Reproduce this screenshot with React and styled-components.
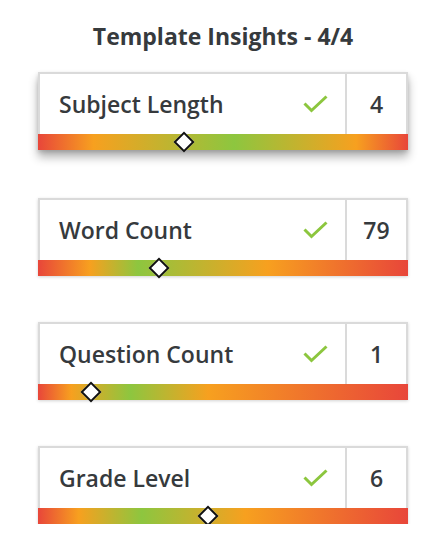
import React from "react";
import styled, { createGlobalStyle } from "styled-components";

const Global = createGlobalStyle`
  html, body { margin: 0; padding: 0; background: #ffffff; }
  body { font-family: "Open Sans", Lato, Arial, sans-serif; }
`;

const RED = "#e8463a";
const ORANGE = "#f7a01f";
const GREEN = "#8dc63f";

const Panel = styled.div`
  width: 370px;
  margin-left: 38px;
  padding-top: 21px;
  display: flex;
  flex-direction: column;
`;

const Title = styled.h2`
  margin: 0 0 23px 0;
  text-align: center;
  font-family: "Open Sans", Arial, sans-serif;
  font-weight: 700;
  font-size: 23px;
  line-height: 30px;
  color: #363a3d;
  white-space: nowrap;
`;

const List = styled.div`
  display: flex;
  flex-direction: column;
  gap: 46px;
`;

const Card = styled.div`
  display: flex;
  flex-direction: column;
  background: #fff;
  box-shadow: ${(p) =>
    p.$raised
      ? "0 7px 9px rgba(0,0,0,0.3), 0 2px 4px rgba(0,0,0,0.14)"
      : "0 1px 3px rgba(0,0,0,0.18)"};
  transform: ${(p) => (p.$raised ? "translateY(-2px)" : "none")};
`;

const Top = styled.div`
  display: flex;
  height: 62px;
  box-sizing: border-box;
  border: 2px solid #dadada;
  border-bottom: none;
`;

const Label = styled.div`
  flex: 1;
  display: flex;
  align-items: center;
  justify-content: space-between;
  padding: 0 17px 0 19px;
  font-size: 23px;
  font-weight: 600;
  color: #363a3d;
  white-space: nowrap;
`;

const Value = styled.div`
  width: 59px;
  display: flex;
  align-items: center;
  justify-content: center;
  border-left: 2px solid #dadada;
  font-size: 23px;
  font-weight: 600;
  color: #363a3d;
`;

const Bar = styled.div`
  position: relative;
  height: 16px;
`;

const Marker = styled.div`
  position: absolute;
  top: 50%;
  width: 11px;
  height: 11px;
  background: #fff;
  border: 2px solid #111;
  transform: translate(-50%, -50%) rotate(45deg);
`;

const Check = () => (
  <svg width="25" height="18" viewBox="0 0 25 18" fill="none">
    <path
      d="M1.5 8.5 L8.5 15.5 L23.5 1.5"
      stroke="#8cc63e"
      strokeWidth="3"
      strokeLinecap="butt"
      strokeLinejoin="miter"
    />
  </svg>
);

const items = [
  { label: "Subject Length", value: "4", stops: [15, 53, 86], pos: 39.5, raised: true },
  { label: "Word Count", value: "79", stops: [14, 27, 62], pos: 32.7 },
  { label: "Question Count", value: "1", stops: [9, 25, 46], pos: 14.3 },
  { label: "Grade Level", value: "6", stops: [11, 28, 56], pos: 46 },
];

const gradient = ([a, b, c]) =>
  `linear-gradient(90deg, ${RED} 0%, ${ORANGE} ${a}%, ${GREEN} ${b}%, ${ORANGE} ${c}%, ${RED} 100%)`;

export default function App() {
  return (
    <>
      <Global />
      <Panel>
        <Title>Template Insights - 4/4</Title>
        <List>
          {items.map((it) => (
            <Card key={it.label} $raised={it.raised}>
              <Top>
                <Label>
                  <span>{it.label}</span>
                  <Check />
                </Label>
                <Value>{it.value}</Value>
              </Top>
              <Bar style={{ background: gradient(it.stops) }}>
                <Marker style={{ left: `${it.pos}%` }} />
              </Bar>
            </Card>
          ))}
        </List>
      </Panel>
    </>
  );
}
